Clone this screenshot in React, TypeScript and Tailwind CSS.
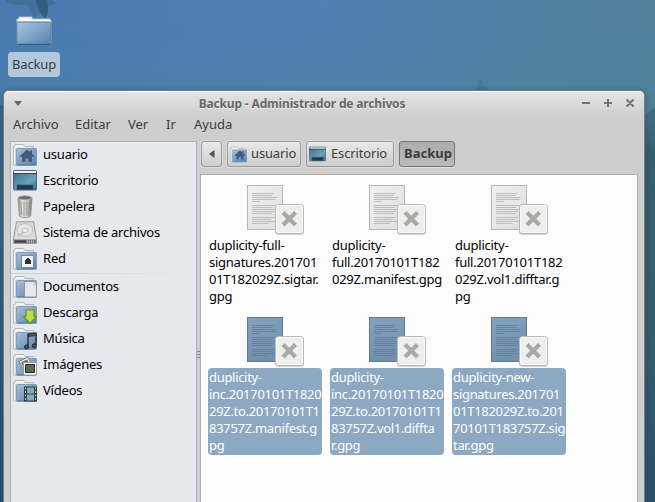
import React from "react";

type Kind = "home" | "desktop" | "trash" | "disk" | "network" | "docs" | "download" | "music" | "images" | "video";

function FolderBase() {
  return (
    <>
      <path d="M.5 22V3.500h1.500V1.500h8.500L12 3.500h8.500V22z" fill="#f6f6f6" stroke="#b3b6ba" />
      <path d="M2.500 5h18.500v17H2.500z" fill="#eef1f4" stroke="#c4c8cc" strokeWidth=".7" />
      <rect x="3.500" y="5.500" width="20" height="16.500" rx=".8" fill="url(#folderBlue)" stroke="#7493b3" strokeWidth=".8" />
      <path d="M3.500 22h20" stroke="#4f769f" />
    </>
  );
}

function Icon({ kind, size = 24 }: { kind: Kind; size?: number }) {
  const folder = kind !== "desktop" && kind !== "trash" && kind !== "disk";
  return (
    <svg width={size} height={size} viewBox="0 0 24 24" className="shrink-0">
      {folder && <FolderBase />}
      {kind === "home" && <path d="M14 6.500 6 13.700h3V19h3.500v-3.500h3V19H19v-5.300h3L19 11V7.500h-2V9z" fill="#3f5d7c" />}
      {kind === "desktop" && (
        <>
          <rect x=".5" y="1.500" width="23" height="19.500" rx="1" fill="url(#screenBlue)" stroke="#47667f" />
          <path d="M1 2h22v2H1z" fill="#f0f0ee" />
          <path d="M0 4.500h24" stroke="#3b3f43" />
          <path d="M4 16h16v4.500H4z" fill="#20374c" stroke="#39546b" strokeWidth=".7" />
        </>
      )}
      {kind === "trash" && (
        <>
          <path d="m5 3 1.300 18c2 2 9.400 2 11.400 0L19 3z" fill="url(#steel)" stroke="#858585" strokeWidth=".7" />
          <path d="M8 6.500 8.500 20M11 7v14M14 7v14M16.500 6.500 16 20" stroke="#858585" strokeWidth=".8" />
          <ellipse cx="12" cy="2.800" rx="7" ry="2" fill="#6a6a6a" stroke="#b2b2b2" />
        </>
      )}
      {kind === "disk" && (
        <>
          <path d="M3.500.8h17L23.500 18v4.500H.5V18z" fill="#dcdcdc" stroke="#9b9b9b" />
          <ellipse cx="12" cy="9" rx="8" ry="6.500" fill="#e4e4e4" stroke="#c0c0c0" />
          <ellipse cx="12" cy="9.500" rx="3" ry="2" fill="#f5f5f5" stroke="#aaa" strokeWidth=".7" />
          <path d="m5 15 6-4" stroke="#b2b2b2" strokeWidth="1.200" />
          <path d="M1 18.500h22V22H1z" fill="#777" />
          <path d="M2 20.500h11" stroke="#414141" strokeWidth="2" />
          <path d="M14 20.500h8" stroke="#c4c4c4" strokeWidth="2" strokeDasharray="1 1" />
        </>
      )}
      {kind === "network" && (
        <>
          <path d="M8.500 8.500h12v12h-12z" fill="#f3f3ef" stroke="#888a85" />
          <path d="M12 17v-4h1v-1h1v-1h2v1h1v1h1v4z" fill="#2e3436" />
        </>
      )}
      {kind === "docs" && (
        <>
          <path d="M11.500 6.500h9l3 3.500v12h-12z" fill="#e8e8e8" stroke="#929292" />
          <path d="m20.500 6.500 .5 3h2.500" fill="#fff" stroke="#aaa" strokeWidth=".7" />
        </>
      )}
      {kind === "download" && <path d="M13 9h8v6.500h2.500L17 22.500l-6.500-7H13z" fill="#b7df43" stroke="#6c9623" strokeWidth="1.200" />}
      {kind === "music" && (
        <>
          <path d="M15 19V7.500l8-1V18" fill="none" stroke="#303436" strokeWidth="1.500" />
          <path d="m15 9.500 8-1V6l-8 1z" fill="#4d5458" stroke="#303436" />
          <ellipse cx="13.500" cy="20" rx="2" ry="2" fill="#4d5458" stroke="#202326" />
          <ellipse cx="21.200" cy="18.800" rx="2" ry="2" fill="#4d5458" stroke="#202326" />
        </>
      )}
      {kind === "images" && (
        <>
          <path d="m6 8.500 9-4.500 5 10-8 5z" fill="#e8e8e6" stroke="#848583" />
          <path d="m8 9.500 6-3 3 5-6 4z" fill="#6b716e" />
          <path d="M10.500 9.500h13v12.500h-13z" fill="#fff" stroke="#999" />
          <path d="M12.500 11.500h9v8h-9z" fill="#62684f" stroke="#26292a" />
        </>
      )}
      {kind === "video" && (
        <>
          <path d="M11 7.500h13v15H11z" fill="#343a3b" />
          <path d="M14 8.500h7v6h-7zm0 7h7v6h-7z" fill="#7dadbe" />
          <path d="M12.500 8.500v14M22.500 8.500v14" stroke="#c1c7c5" strokeDasharray="2 1.500" />
        </>
      )}
    </svg>
  );
}

function SharedPaint() {
  return (
    <svg className="absolute h-0 w-0">
      <defs>
        <linearGradient id="folderBlue" x2="1" y2="1"><stop stopColor="#a5bfdb" /><stop offset=".55" stopColor="#7d9fc4" /><stop offset="1" stopColor="#5880ae" /></linearGradient>
        <linearGradient id="bigFolder" x2="1" y2="1"><stop stopColor="#a9c7e2" /><stop offset="1" stopColor="#5881b0" /></linearGradient>
        <linearGradient id="screenBlue" x2="1" y2="1"><stop stopColor="#396d9a" /><stop offset=".65" stopColor="#69a2b9" /><stop offset="1" stopColor="#336b93" /></linearGradient>
        <linearGradient id="steel" x2="1"><stop stopColor="#888" /><stop offset=".3" stopColor="#e4e4e4" /><stop offset=".7" stopColor="#c4c4c4" /><stop offset="1" stopColor="#777" /></linearGradient>
        <linearGradient id="paper" y2="1"><stop stopColor="#f0f0f0" /><stop offset="1" stopColor="#dedede" /></linearGradient>
        <linearGradient id="bluePaper" x2=".3" y2="1"><stop stopColor="#84a3bf" /><stop offset="1" stopColor="#7190ad" /></linearGradient>
      </defs>
    </svg>
  );
}

function Place({ kind, label }: { kind: Kind; label: string }) {
  return <div className="flex h-[26px] items-center gap-[6px] pl-[2px]"><Icon kind={kind} /><span>{label}</span></div>;
}

const printedLines = [[8, 26.500], [10, 25], [12, 29.500], [14, 28.500], [16, 13], [20, 28], [22, 25.500], [24, 29], [26, 27], [28, 25], [32, 27], [34, 24], [36, 29], [38, 21.500]];

function FileItem({ name, selected = false, indent = "pl-px" }: { name: string[]; selected?: boolean; indent?: string }) {
  return (
    <div className="w-[114px]">
      <svg className="ml-[39px] block" width="60" height="52" viewBox="0 0 60 52">
        <rect x=".5" y=".5" width="35" height="44" fill={selected ? "url(#bluePaper)" : "url(#paper)"} stroke={selected ? "#607993" : "#b5b5b5"} />
        {printedLines.map(([y, end]) => <path key={y} d={`M5 ${y + .5}H${end}`} stroke={selected ? "#66829d" : "#bdbdbd"} />)}
        <rect x="28" y="20" width="29" height="30" rx="3" fill="#888" opacity=".35" />
        <rect x="28.500" y="19.500" width="28" height="29" rx="3" fill="#eeeeec" stroke="#b8b8b8" />
        <rect x="29.500" y="20.500" width="26" height="27" rx="2" fill="none" stroke="#fafafa" />
        <path d="m37.500 29 9.500 9.500M47 29l-9.500 9.500" stroke="#a8aaa4" strokeWidth="4.200" strokeLinecap="square" />
      </svg>
      <div className={`${indent} ${selected ? "-mt-px h-[87px] rounded-[4px] bg-[#8da8c2] pt-px tracking-[-0.31px] text-white" : "tracking-[-0.25px] text-black"}`}>
        {name.map((line) => <div key={line} className="h-[17px] whitespace-nowrap leading-[17px]">{line}</div>)}
      </div>
    </div>
  );
}

function PathButton({ kind, label, className }: { kind: Kind; label: string; className: string }) {
  return <button className={`flex h-[26px] items-center rounded-[3px] border border-[#999] bg-linear-to-b from-[#e9e9e9] to-[#cecece] tracking-[-0.15px] shadow-[0_0_0_1px_#d9d9d9] ${className}`}><Icon kind={kind} size={17} /><span>{label}</span></button>;
}

export default function App() {
  return (
    <div className="relative h-[502px] w-[655px] overflow-hidden bg-linear-to-r from-[#4878af] via-[#5280b0] to-[#528295] font-['Noto_Sans','Open_Sans',sans-serif] text-[13px] text-[#3c3c3c]">
      <SharedPaint />
      <svg className="absolute inset-0" width="655" height="502">
        <defs>
          <linearGradient id="skyShade" x2="0" y2="1"><stop offset="0" stopColor="#5080b5" stopOpacity=".2" /><stop offset=".18" stopColor="#4c82a4" stopOpacity=".45" /><stop offset=".23" stopColor="#46768c" stopOpacity=".5" /><stop offset=".3" stopColor="#3b6373" /><stop offset=".65" stopColor="#35606a" /><stop offset=".8" stopColor="#315872" /><stop offset="1" stopColor="#244766" /></linearGradient>
          <linearGradient id="leftShade" x2="0" y2="1"><stop stopColor="#3a6686" /><stop offset=".4" stopColor="#35617d" /><stop offset="1" stopColor="#284c70" /></linearGradient>
        </defs>
        <path d="M0 0h655v502H0z" fill="url(#skyShade)" />
        <path d="M0 105h5v397H0z" fill="url(#leftShade)" />
        <path d="M5 0q8 7 20 4 7 5 8 13 8-3 10-10 8-2 13-3L53 0z" fill="#426f9c" />
        <path d="M36 0q2 12 9 18 5-6 2-18z" fill="#315c84" />
        <path d="M477 90q-1-6 3-12 3 7 8 12z" fill="#4a7690" />
        <path d="M645 116q4-6 10-8v394h-10z" fill="#31596c" opacity=".45" />
      </svg>
      <div className="absolute top-[16px] left-[8px] flex w-[52px] flex-col items-center">
        <svg width="36" height="30" viewBox="0 0 36 30">
          <path d="M1 27V3h2V1h13v2h18l1 2v22z" fill="#f7f7f5" stroke="#c2c8cd" strokeWidth=".8" />
          <rect x=".8" y="6" width="34" height="22" rx="1" fill="url(#bigFolder)" stroke="#5679a0" />
          <path d="M2 28.500h32" stroke="#375d83" />
        </svg>
        <div className="mt-[6px] flex h-[25px] w-full items-center justify-center rounded-[4px] bg-[#b3c8dd] tracking-[-0.15px]">Backup</div>
      </div>

      <section className="relative mt-[90px] ml-[3px] h-[420px] w-[642px] rounded-t-[6px] border border-[#777d81] bg-[#cecece] shadow-[0_0_5px_rgba(20,40,60,0.3)]">
        <header className="relative flex h-[25px] items-center justify-center rounded-t-[5px] border-t border-white bg-linear-to-b from-[#e4e4e4] to-[#cfcfcf] text-[12px] font-bold tracking-[-0.16px] text-[#686868] [text-shadow:0_1px_#eee]">
          <svg className="absolute top-[9px] left-[10px]" width="9" height="6"><path d="M0 0h8L4 5z" fill="#666" /></svg>
          <span className="-ml-[44px]">Backup - Administrador de archivos</span>
          <svg className="absolute top-[6px] right-[8px]" width="54" height="11" fill="none" stroke="#747474" strokeWidth="2"><path d="M0 5h8M22 5h8M26 1v8M44.500 1.500l7 7m0-7-7 7" /></svg>
        </header>
        <nav className="flex h-[25px] items-center pb-[7px] pl-[9px] text-[13px]">
          <span className="w-[62px]">Archivo</span><span className="w-[53px]">Editar</span><span className="w-[38px]">Ver</span><span className="w-[28px]">Ir</span><span>Ayuda</span>
        </nav>
        <div className="flex h-[369px] pl-[6px]">
          <aside className="h-full w-[187px] border border-[#b0b0b4] bg-[#e5e8ed] tracking-[-0.21px] text-black">
            <Place kind="home" label="usuario" /><Place kind="desktop" label="Escritorio" /><Place kind="trash" label="Papelera" /><Place kind="disk" label="Sistema de archivos" /><Place kind="network" label="Red" />
            <div className="h-[2px] pt-px"><div className="h-px bg-linear-to-r from-[#cdd0d5] to-[#e5e8ed]" /></div>
            <Place kind="docs" label="Documentos" /><Place kind="download" label="Descarga" /><Place kind="music" label="Música" /><Place kind="images" label="Imágenes" /><Place kind="video" label="Vídeos" />
          </aside>
          <div className="w-[3px] pt-[210px]"><div className="h-[7px] border-y border-[#888] py-[2px]"><div className="h-px bg-[#888]" /></div></div>
          <main className="w-[438px]">
            <div className="flex h-[33px] items-start gap-[5px] pl-px">
              <button className="flex h-[26px] w-[21px] items-center justify-center rounded-[3px] border border-[#999] bg-linear-to-b from-[#e9e9e9] to-[#cecece] shadow-[0_0_0_1px_#d9d9d9]"><svg width="6" height="8"><path d="M5.500 0v8L0 4z" fill="#555" /></svg></button>
              <PathButton kind="home" label="usuario" className="w-[74px] gap-[4px] pl-[2px]" />
              <PathButton kind="desktop" label="Escritorio" className="w-[88px] gap-[5px] pl-[2px]" />
              <button className="flex h-[26px] w-[56px] items-center justify-center rounded-[3px] border border-[#777] bg-linear-to-b from-[#adadad] to-[#bababa] pl-[2px] text-[13px] font-bold shadow-[0_1px_0_#e3e3e3]">Backup</button>
            </div>
            <div className="h-[336px] border border-[#adadad] bg-[#fcfcfc]">
              <div className="grid grid-cols-[114px_114px_114px] gap-x-[8px] pt-[10px] pl-[7px]">
                <FileItem name={["duplicity-full-", "signatures.201701", "01T182029Z.sigtar.", "gpg"]} />
                <FileItem indent="pl-[2px]" name={["duplicity-", "full.20170101T182", "029Z.manifest.gpg"]} />
                <FileItem indent="pl-[3px]" name={["duplicity-", "full.20170101T182", "029Z.vol1.difftar.g", "pg"]} />
              </div>
              <div className="grid grid-cols-[114px_114px_114px] gap-x-[8px] pt-[12px] pl-[7px]">
                <FileItem selected name={["duplicity-", "inc.20170101T1820", "29Z.to.20170101T1", "83757Z.manifest.g", "pg"]} />
                <FileItem selected name={["duplicity-", "inc.20170101T1820", "29Z.to.20170101T1", "83757Z.vol1.diffta", "r.gpg"]} />
                <FileItem selected name={["duplicity-new-", "signatures.201701", "01T182029Z.to.201", "70101T183757Z.sig", "tar.gpg"]} />
              </div>
            </div>
          </main>
        </div>
      </section>
    </div>
  );
}
